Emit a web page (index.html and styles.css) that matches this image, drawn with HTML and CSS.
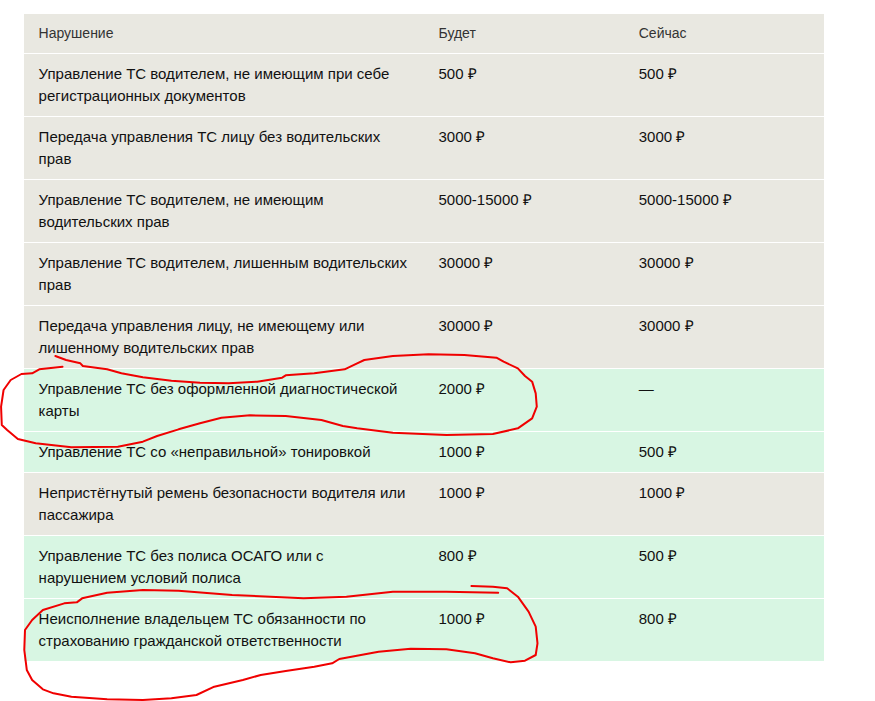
FILE: index.html
```html
<!DOCTYPE html>
<html lang="ru">
<head>
<meta charset="utf-8">
<title>Штрафы</title>
<link rel="stylesheet" href="styles.css">
</head>
<body>
<main class="page">
<table class="fines">
<colgroup><col class="col-name"><col class="col-val"><col class="col-val"></colgroup>
<thead>
<tr><th>Нарушение</th><th>Будет</th><th>Сейчас</th></tr>
</thead>
<tbody>
<tr><td>Управление ТС водителем, не имеющим при себе регистрационных документов</td><td>500 ₽</td><td>500 ₽</td></tr>
<tr><td>Передача управления ТС лицу без водительских прав</td><td>3000 ₽</td><td>3000 ₽</td></tr>
<tr><td>Управление ТС водителем, не имеющим водительских прав</td><td>5000-15000 ₽</td><td>5000-15000 ₽</td></tr>
<tr><td>Управление ТС водителем, лишенным водительских прав</td><td>30000 ₽</td><td>30000 ₽</td></tr>
<tr><td>Передача управления лицу, не имеющему или лишенному водительских прав</td><td>30000 ₽</td><td>30000 ₽</td></tr>
<tr class="new"><td>Управление ТС без оформленной диагностической карты</td><td>2000 ₽</td><td>—</td></tr>
<tr class="new"><td>Управление ТС со «неправильной» тонировкой</td><td>1000 ₽</td><td>500 ₽</td></tr>
<tr><td>Непристёгнутый ремень безопасности водителя или пассажира</td><td>1000 ₽</td><td>1000 ₽</td></tr>
<tr class="new"><td>Управление ТС без полиса ОСАГО или с нарушением условий полиса</td><td>800 ₽</td><td>500 ₽</td></tr>
<tr class="new last"><td>Неисполнение владельцем ТС обязанности по страхованию гражданской ответственности</td><td>1000 ₽</td><td>800 ₽</td></tr>
</tbody>
</table>
<svg class="marks" width="875" height="701" viewBox="0 0 875 701" aria-hidden="true">
<g transform="translate(0 340) scale(.35714 .33333)">
<path class="ink" d="M155 48L185 60 225 70 232 78 300 88 340 100 400 112 480 122 560 128 640 130 720 125 790 113 800 106 880 100 965 88 1000 70 1020 60 1100 48 1200 43 1300 45 1390 53 1410 65 1450 85 1470 108 1490 125 1500 160 1503 200 1490 235 1450 265 1380 282 1250 285 1100 278 1000 265 960 258 900 240 800 228 700 226 620 233 560 250 500 268 440 288 400 305 330 320 200 322 100 310 50 297 20 270 5 255 3 200 10 150 30 120 60 102 90 100 110 88 175 80"/>
</g>
<g transform="translate(0 570) scale(.35714 .33333)">
<path class="ink" d="M1320 48L1380 50 1420 55 1450 80 1480 125 1500 170 1505 220 1500 255 1470 272 1430 277 1380 265 1330 250 1250 238 1150 236 1060 245 950 267 930 280 880 290 800 303 730 315 680 330 600 350 550 375 480 385 400 390 300 388 200 380 150 370 120 358 90 330 75 300 68 240 70 180 90 150 120 120 180 100 215 97 230 85 300 68 400 60 500 62 650 75 850 85 970 80 1100 65 1250 65 1395 68"/>
</g>
</svg>
</main>
</body>
</html>
```
FILE: styles.css
```css
html, body {
  margin: 0;
  padding: 0;
  background: #fff;
}
.page {
  position: relative;
  width: 875px;
  height: 701px;
  padding: 14px 0 0 24px;
  box-sizing: border-box;
  overflow: hidden;
}
.fines {
  width: 800px;
  table-layout: fixed;
  border-collapse: separate;
  border-spacing: 0;
  font-family: "Liberation Sans", Arial, sans-serif;
  font-size: 15px;
  line-height: 22px;
  color: #111;
  background: #e9e8e1;
}
.col-name { width: 399.5px; }
.col-val { width: 200.25px; }
.fines th {
  padding: 8px 15px 9px;
  font-size: 14px;
  font-weight: 400;
  text-align: left;
  color: #333;
  border-bottom: 1px solid #fff;
}
.fines td {
  padding: 9px 15px;
  vertical-align: top;
  border-bottom: 1px solid #fff;
}
.fines th:first-child,
.fines td:first-child { padding-left: 14.6px; }
.fines .new td { background: #d8f6e3; }
.fines .last td { border-bottom: 0; }
.marks {
  position: absolute;
  left: 0;
  top: 0;
  pointer-events: none;
}
.ink {
  fill: none;
  stroke: #f00000;
  stroke-width: 2px;
  vector-effect: non-scaling-stroke;
  stroke-linejoin: round;
  stroke-linecap: round;
}
```
